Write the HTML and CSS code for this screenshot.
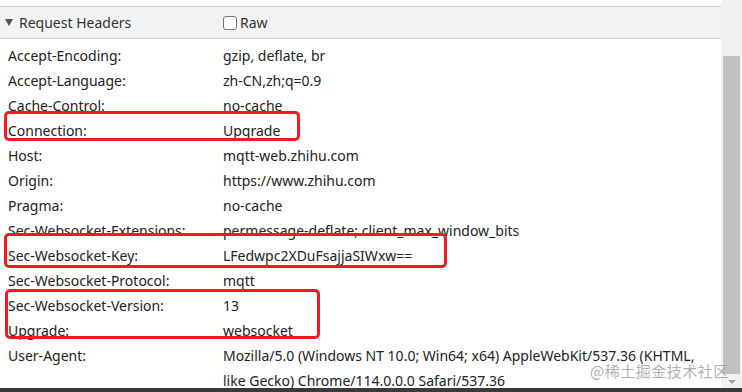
FILE: index.html
```html
<!DOCTYPE html>
<html>
<head>
<meta charset="utf-8">
<link rel="stylesheet" href="styles.css">
</head>
<body>
<div class="frame">
  <div class="pane">
    <div class="main">
      <div class="topstrip"></div>
      <div class="header">
        <div class="title"><span class="tri"></span><span>Request Headers</span></div>
        <label class="raw"><span class="box"></span><span>Raw</span></label>
      </div>
      <div class="list">
        <div class="row"><div class="k">Accept-Encoding:</div><div class="v">gzip, deflate, br</div></div>
        <div class="row"><div class="k">Accept-Language:</div><div class="v">zh-CN,zh;q=0.9</div></div>
        <div class="row"><div class="k">Cache-Control:</div><div class="v">no-cache</div></div>
        <div class="row"><div class="k">Connection:</div><div class="v">Upgrade</div></div>
        <div class="row"><div class="k">Host:</div><div class="v">mqtt-web.zhihu.com</div></div>
        <div class="row"><div class="k">Origin:</div><div class="v">https://www.zhihu.com</div></div>
        <div class="row"><div class="k">Pragma:</div><div class="v">no-cache</div></div>
        <div class="row"><div class="k">Sec-Websocket-Extensions:</div><div class="v">permessage-deflate; client_max_window_bits</div></div>
        <div class="row"><div class="k">Sec-Websocket-Key:</div><div class="v">LFedwpc2XDuFsajjaSIWxw==</div></div>
        <div class="row"><div class="k">Sec-Websocket-Protocol:</div><div class="v">mqtt</div></div>
        <div class="row"><div class="k">Sec-Websocket-Version:</div><div class="v">13</div></div>
        <div class="row"><div class="k">Upgrade:</div><div class="v">websocket</div></div>
        <div class="row"><div class="k">User-Agent:</div><div class="v">Mozilla/5.0 (Windows NT 10.0; Win64; x64) AppleWebKit/537.36 (KHTML, like Gecko) Chrome/114.0.0.0 Safari/537.36</div></div>
        <div class="hl hl-conn"></div>
        <div class="hl hl-key"></div>
        <div class="hl hl-ver"></div>
      </div>
    </div>
    <div class="scrollbar">
      <div class="thumb"></div>
      <div class="arrow"></div>
    </div>
    <div class="watermark">@稀土掘金技术社区</div>
  </div>
  <div class="bottombar"></div>
</div>
</body>
</html>
```
FILE: styles.css
```css
html, body {
  margin: 0;
  padding: 0;
  background: #fff;
}
body {
  width: 742px;
  height: 392px;
  overflow: hidden;
  font-family: "Noto Sans", "Open Sans", sans-serif;
  font-size: 14px;
  color: #222;
}
.frame {
  display: flex;
  flex-direction: column;
  height: 392px;
}
.pane {
  position: relative;
  display: flex;
  flex: 1;
  min-height: 0;
  overflow: hidden;
}
.main {
  flex: 1;
  min-width: 0;
  display: flex;
  flex-direction: column;
}
.topstrip {
  height: 6px;
  flex-shrink: 0;
  background: #fff;
}
.header {
  height: 31px;
  flex-shrink: 0;
  border-top: 1px solid #cfcfcf;
  border-bottom: 1px solid #cfcfcf;
  background: #f2f3f5;
  display: flex;
  align-items: center;
  color: #333;
}
.title {
  width: 223px;
  display: flex;
  align-items: center;
  padding-left: 5px;
  box-sizing: border-box;
}
.tri {
  width: 0;
  height: 0;
  border-left: 4px solid transparent;
  border-right: 4px solid transparent;
  border-top: 7px solid #555;
  margin-right: 6px;
}
.raw {
  display: flex;
  align-items: center;
}
.box {
  width: 12px;
  height: 12px;
  border: 1px solid #767676;
  border-radius: 3px;
  background: #fff;
  margin-right: 3px;
}
.list {
  position: relative;
  flex-shrink: 0;
  padding-top: 4px;
}
.row {
  display: flex;
  line-height: 25px;
}
.k {
  width: 215px;
  padding-left: 8px;
  flex-shrink: 0;
}
.v {
  width: 492px;
}
.hl {
  position: absolute;
  border: 3px solid #ee1c22;
  border-radius: 5px;
}
.hl-conn {
  left: 4px;
  top: 72px;
  width: 290px;
  height: 24px;
}
.hl-key {
  left: 4px;
  top: 194px;
  width: 437px;
  height: 29px;
}
.hl-ver {
  left: 5px;
  top: 250px;
  width: 309px;
  height: 44px;
}
.scrollbar {
  width: 21px;
  flex-shrink: 0;
  background: #f1f1f1;
  display: flex;
  flex-direction: column;
  align-items: center;
  padding-top: 56px;
  box-sizing: border-box;
}
.thumb {
  width: 17px;
  height: 318px;
  flex-shrink: 0;
  background: #c1c1c1;
}
.arrow {
  margin-top: 6px;
  width: 0;
  height: 0;
  border-left: 4px solid transparent;
  border-right: 4px solid transparent;
  border-top: 4px solid #a3a3a3;
}
.watermark {
  position: absolute;
  left: 590px;
  top: 360px;
  font-family: "Noto Sans CJK SC", sans-serif;
  font-size: 15px;
  color: rgba(150, 150, 150, 0.75);
  letter-spacing: 0.5px;
}
.bottombar {
  height: 4px;
  flex-shrink: 0;
  background: #3a3a3a;
}
```
